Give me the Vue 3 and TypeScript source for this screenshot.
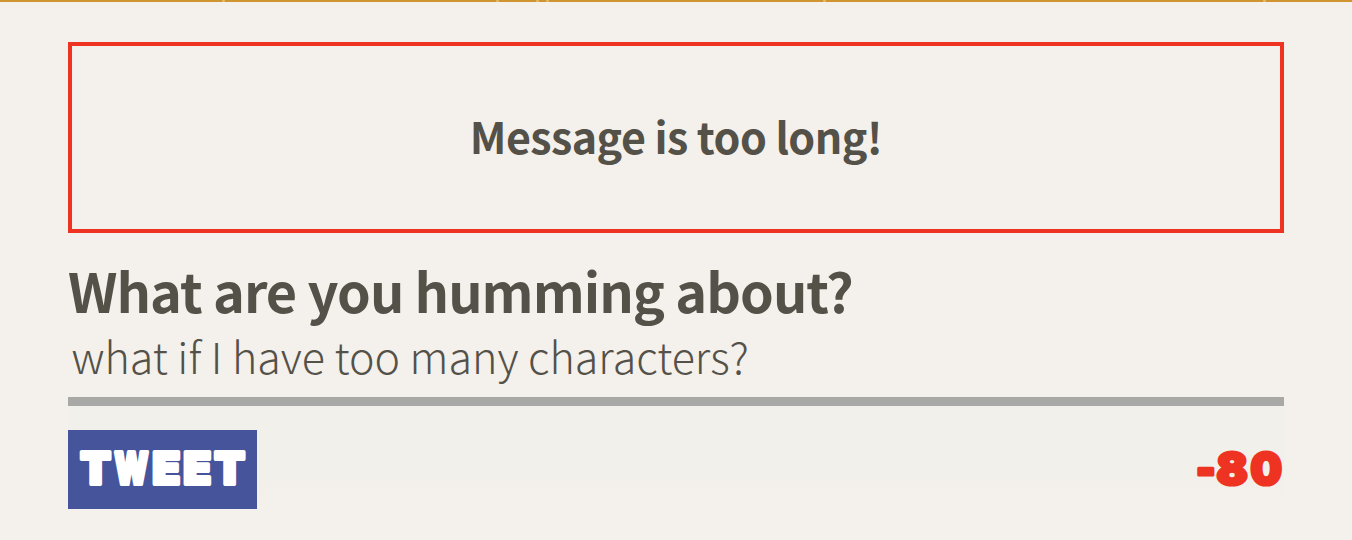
<script setup lang="ts">
interface Glyph { char: string; x: number; scale: number }

const label: Glyph[] = [
  { char: 'T', x: 12.6, scale: 1.0 },
  { char: 'W', x: 46.5, scale: 0.71 },
  { char: 'E', x: 84.5, scale: 1.02 },
  { char: 'E', x: 115.5, scale: 1.02 },
  { char: 'T', x: 146.6, scale: 1.0 },
]
const count: Glyph[] = [
  { char: '-', x: 0, scale: 0.92 },
  { char: '8', x: 20.5, scale: 1.02 },
  { char: '0', x: 54.5, scale: 0.98 },
]
const flecks: number[] = [222, 496, 536, 546, 823, 1263]
const message = 'what if I have too many characters?'
</script>

<template>
  <main class="page">
    <svg class="banner" width="1352" height="2">
      <rect v-for="x in flecks" :key="x" :x="x" y="0" width="3" height="2" rx="1" />
    </svg>
    <div class="content">
      <div class="error">Message is too long!</div>
      <h2 class="title">What are you humming about?</h2>
      <div class="field">{{ message }}</div>
      <div class="actions">
        <button class="tweet" aria-label="TWEET">
          <svg width="189" height="79">
            <g v-for="(g, i) in label" :key="i" :transform="`translate(${g.x} 54.3) scale(${g.scale} 1)`"><text class="heavy">{{ g.char }}</text></g>
          </svg>
        </button>
        <svg class="count" width="88" height="79">
          <g v-for="(g, i) in count" :key="i" :transform="`translate(${g.x} 54.7) scale(${g.scale} 1)`"><text class="heavy">{{ g.char }}</text></g>
        </svg>
      </div>
    </div>
  </main>
</template>

<style>
body { background: #f4f0eb; }
</style>

<style scoped>
.page {
  height: 540px;
  overflow: hidden;
  background: #f4f0eb;
  color: #545149;
  font-family: "Noto Sans CJK JP", "Noto Sans", sans-serif;
}
.banner { display: block; background: #d09530; fill: #e3bd69; }
.content { padding: 40px 68px 0; }
.error {
  box-sizing: border-box;
  height: 191px;
  border: 4px solid #ee3322;
  line-height: 179px;
  font-size: 43px;
  font-weight: 700;
  letter-spacing: -0.58px;
  text-align: center;
}
.title {
  height: 90px;
  margin: 0;
  padding-top: 12px;
  box-sizing: border-box;
  line-height: 90px;
  font-size: 54px;
  font-weight: 700;
  letter-spacing: -0.98px;
  white-space: nowrap;
}
.field {
  box-sizing: border-box;
  height: 83px;
  padding-left: 3.5px;
  border-bottom: 9px solid #a8a8a7;
  line-height: 64px;
  font-size: 43px;
  font-weight: 300;
  white-space: nowrap;
}
.actions {
  display: flex;
  justify-content: space-between;
  padding-top: 24px;
  background: linear-gradient(#f2f0eb, #f2f0eb 60px, #f4f0eb 100px);
}
.tweet { padding: 0; border: 0; background: #46559b; color: #fff; }
.tweet svg { display: block; }
.count { color: #ee3322; }
.heavy {
  font-family: Inter, sans-serif;
  font-size: 44px;
  font-weight: 900;
  fill: currentColor;
  stroke: currentColor;
  stroke-width: 4px;
  stroke-linejoin: round;
}
.count .heavy { font-size: 45px; stroke-width: 3.2px; }
</style>
